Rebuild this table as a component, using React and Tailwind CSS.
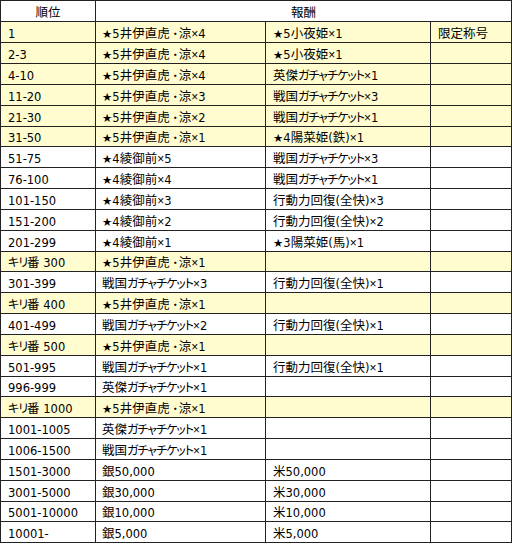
import React from "react";

const rows = [
  ["1", "★5井伊直虎・涼×4", "★5小夜姫×1", "限定称号", true],
  ["2-3", "★5井伊直虎・涼×4", "★5小夜姫×1", "", true],
  ["4-10", "★5井伊直虎・涼×4", "英傑ガチャチケット×1", "", true],
  ["11-20", "★5井伊直虎・涼×3", "戦国ガチャチケット×3", "", true],
  ["21-30", "★5井伊直虎・涼×2", "戦国ガチャチケット×1", "", true],
  ["31-50", "★5井伊直虎・涼×1", "★4陽菜姫(鉄)×1", "", true],
  ["51-75", "★4綾御前×5", "戦国ガチャチケット×3", "", false],
  ["76-100", "★4綾御前×4", "戦国ガチャチケット×1", "", false],
  ["101-150", "★4綾御前×3", "行動力回復(全快)×3", "", false],
  ["151-200", "★4綾御前×2", "行動力回復(全快)×2", "", false],
  ["201-299", "★4綾御前×1", "★3陽菜姫(馬)×1", "", false],
  ["キリ番 300", "★5井伊直虎・涼×1", "", "", true],
  ["301-399", "戦国ガチャチケット×3", "行動力回復(全快)×1", "", false],
  ["キリ番 400", "★5井伊直虎・涼×1", "", "", true],
  ["401-499", "戦国ガチャチケット×2", "行動力回復(全快)×1", "", false],
  ["キリ番 500", "★5井伊直虎・涼×1", "", "", true],
  ["501-995", "戦国ガチャチケット×1", "行動力回復(全快)×1", "", false],
  ["996-999", "英傑ガチャチケット×1", "", "", false],
  ["キリ番 1000", "★5井伊直虎・涼×1", "", "", true],
  ["1001-1005", "英傑ガチャチケット×1", "", "", false],
  ["1006-1500", "戦国ガチャチケット×1", "", "", false],
  ["1501-3000", "銀50,000", "米50,000", "", false],
  ["3001-5000", "銀30,000", "米30,000", "", false],
  ["5001-10000", "銀10,000", "米10,000", "", false],
  ["10001-", "銀5,000", "米5,000", "", false],
];

const KANJI = /[\u3400-\u9fff]/;
const KANA = /[\u3000-\u30fa\u30fc-\u30ff\uff00-\uffef]/;

function kind(ch) {
  if (ch === "・") return "d";
  if (KANJI.test(ch)) return "k";
  if (KANA.test(ch)) return "a";
  if (ch === "×") return "x";
  return "l";
}

function Txt({ s }) {
  const runs = [];
  for (const ch of s) {
    const c = kind(ch);
    const last = runs[runs.length - 1];
    if (last && last.c === c && c !== "d") last.t += ch;
    else runs.push({ c, t: ch });
  }
  return (
    <span>
      {runs.map((r, i) => {
        if (r.c === "k")
          return (
            <span key={i} className="font-['Noto_Sans_CJK_JP',sans-serif] text-[12.5px]">
              {r.t}
            </span>
          );
        if (r.c === "a")
          return (
            <span
              key={i}
              className="font-['Noto_Sans_CJK_JP',sans-serif] text-[12px] tracking-[-1px] [font-feature-settings:'palt']"
            >
              {r.t}
            </span>
          );
        if (r.c === "d")
          return (
            <span
              key={i}
              className="font-['Noto_Sans_CJK_JP',sans-serif] text-[11px] tracking-[-2px]"
            >
              {r.t}
            </span>
          );
        if (r.c === "x")
          return (
            <span key={i} className="font-['Liberation_Sans',sans-serif] text-[12px]">
              {r.t}
            </span>
          );
        return <span key={i}>{r.t}</span>;
      })}
    </span>
  );
}

function Cell({ children, pad }) {
  return (
    <div
      className={
        "flex items-end whitespace-nowrap overflow-hidden border-r border-b border-[#222] leading-[13px] pb-[1px] " +
        (pad === 6 ? "pl-[6px]" : "pl-[7px]")
      }
    >
      {children ? <Txt s={children} /> : null}
    </div>
  );
}

export default function App() {
  return (
    <div className="w-[512px] h-[544px] bg-white overflow-hidden font-['DejaVu_Sans','Noto_Sans_CJK_JP',sans-serif] text-[11.5px] text-black">
      <div className="border-l border-t border-[#222]">
        <div className="grid grid-cols-[95px_170px_165px_81px] h-[21px]">
          <div className="flex items-end justify-center border-r border-b border-[#222] leading-[13px] pb-[1px]">
            <Txt s="順位" />
          </div>
          <div className="col-span-3 flex items-end justify-center border-r border-b border-[#222] leading-[13px] pb-[1px]">
            <Txt s="報酬" />
          </div>
        </div>
        {rows.map((r, i) => (
          <div
            key={i}
            className={
              "grid grid-cols-[95px_170px_165px_81px] " +
              (i % 6 === 5 ? "h-[20px] " : "h-[21px] ") +
              (r[4] ? "bg-[#fffccf]" : "bg-white")
            }
          >
            <Cell>{r[0]}</Cell>
            <Cell pad={6}>{r[1]}</Cell>
            <Cell>{r[2]}</Cell>
            <Cell>{r[3]}</Cell>
          </div>
        ))}
      </div>
    </div>
  );
}
